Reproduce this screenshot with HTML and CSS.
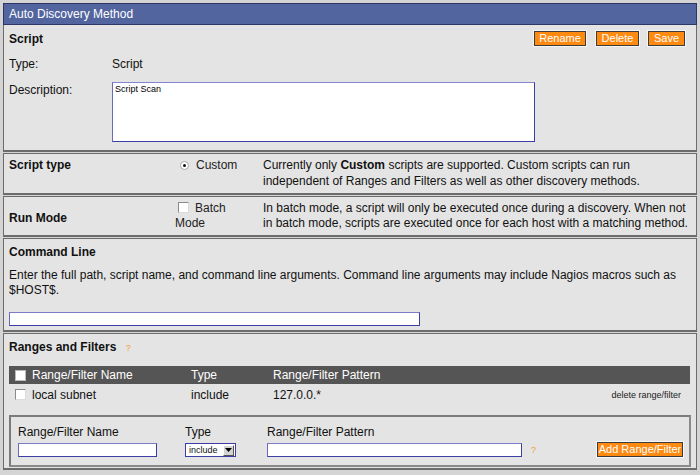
FILE: index.html
```html
<!DOCTYPE html>
<html>
<head>
<meta charset="utf-8">
<link rel="stylesheet" href="styles.css">
</head>
<body>
<div class="frame">
  <div class="titlebar">Auto Discovery Method</div>

  <section class="sec sec-script">
    <div class="script-head">
      <span class="h">Script</span>
      <div class="btns">
        <span class="btn btn-rename">Rename</span>
        <span class="btn btn-delete">Delete</span>
        <span class="btn btn-save">Save</span>
      </div>
    </div>
    <div class="field-row type-row">
      <span class="lbl">Type:</span>
      <span class="val">Script</span>
    </div>
    <div class="field-row desc-row">
      <span class="lbl lbl-desc">Description:</span>
      <textarea class="ta">Script Scan</textarea>
    </div>
  </section>

  <section class="sec sec-opt sec-type">
    <div class="opt-label h">Script type</div>
    <div class="opt-choice"><span class="radio"><span class="dot"></span></span>Custom</div>
    <div class="opt-desc">Currently only <b>Custom</b> scripts are supported. Custom scripts can run independent of Ranges and Filters as well as other discovery methods.</div>
  </section>

  <section class="sec sec-opt sec-run">
    <div class="opt-label h">Run Mode</div>
    <div class="opt-choice batch"><span class="cb"></span>Batch Mode</div>
    <div class="opt-desc">In batch mode, a script will only be executed once during a discovery. When not in batch mode, scripts are executed once for each host with a matching method.</div>
  </section>

  <section class="sec sec-cmd">
    <div class="h">Command Line</div>
    <p class="cmd-text">Enter the full path, script name, and command line arguments. Command line arguments may include Nagios macros such as $HOST$.</p>
    <input class="inp cmd-inp" type="text">
  </section>

  <section class="sec sec-ranges">
    <div class="h">Ranges and Filters <span class="help">?</span></div>
    <div class="rtable">
      <div class="rrow rhead">
        <span class="cell"><span class="cb cb-head"></span></span>
        <span class="cell">Range/Filter Name</span>
        <span class="cell">Type</span>
        <span class="cell">Range/Filter Pattern</span>
        <span class="cell"></span>
      </div>
      <div class="rrow rbody">
        <span class="cell"><span class="cb"></span></span>
        <span class="cell">local subnet</span>
        <span class="cell">include</span>
        <span class="cell">127.0.0.*</span>
        <span class="cell del">delete range/filter</span>
      </div>
    </div>
    <div class="addbox">
      <div class="add-labels">
        <span class="al al-name">Range/Filter Name</span>
        <span class="al al-type">Type</span>
        <span class="al">Range/Filter Pattern</span>
      </div>
      <div class="add-inputs">
        <input class="inp name-inp" type="text">
        <span class="sel"><span class="sel-txt">include</span><span class="sel-btn"><svg width="7" height="4" viewBox="0 0 7 4"><path d="M0 0h7L3.5 4z" fill="#000"/></svg></span></span>
        <input class="inp pat-inp" type="text">
        <span class="help help2">?</span>
        <span class="btn btn-add">Add Range/Filter</span>
      </div>
    </div>
  </section>
</div>
</body>
</html>
```

FILE: styles.css
```css
* { box-sizing: border-box; }
html, body { margin: 0; padding: 0; }
body {
  width: 700px;
  height: 475px;
  background: #d4d4d4;
  font-family: "Liberation Sans", Arial, sans-serif;
  font-size: 12px;
  color: #111;
  overflow: hidden;
}
.frame {
  padding: 3px 3px 0 3px;
}
.titlebar {
  height: 22px;
  background: #53659f;
  border: 1px solid #2c3766;
  color: #fff;
  font-size: 12px;
  line-height: 20px;
  padding-left: 5px;
}
.sec {
  background: #e4e4e4;
  border: 1px solid #6c6c6c;
  border-bottom: 2px solid #6c6c6c;
  margin-top: 1px;
  padding-left: 5px;
  padding-right: 6px;
}
.sec-script { margin-top: 0; border-top: 0; height: 127px; padding-top: 6px; }
.h { font-weight: bold; }

.script-head {
  display: flex;
  justify-content: space-between;
  align-items: center;
  height: 15px;
  padding-right: 5px;
}
.btns { display: flex; gap: 9px; }
.btn {
  display: inline-block;
  height: 15px;
  background: #ff8a12;
  border: 1px solid #3c3c3c;
  box-shadow: 0 0 0 1px #f6f6f6;
  color: #fff;
  font-size: 11px;
  line-height: 13px;
  text-align: center;
}
.btn-rename { width: 52px; margin-right: 1px; }
.btn-delete { width: 43px; }
.btn-save { width: 37px; }

.field-row { display: flex; line-height: 14px; }
.lbl { width: 103px; flex: none; }
.type-row { margin-top: 11px; }
.desc-row { margin-top: 11px; }
.lbl-desc { padding-top: 1px; }
.ta {
  width: 423px;
  height: 60px;
  margin: 0;
  padding: 1px 2px;
  border: 1px solid #3d3da6;
  border-top-color: #8585cf;
  border-left-color: #6a6abc;
  background: #fff;
  font-family: "Liberation Sans", Arial, sans-serif;
  font-size: 9px;
  line-height: 11px;
  resize: none;
  color: #000;
}

.sec-opt {
  display: grid;
  grid-template-columns: 166px 88px 1fr;
  padding-right: 3px;
}
.sec-type { height: 42px; padding-top: 3px; line-height: 16px; }
.sec-run { height: 41px; padding-top: 4px; line-height: 15px; }
.sec-run .opt-label { align-self: center; }
.opt-choice { color: #222; }
.sec-type .opt-choice { padding-left: 5px; display: flex; align-items: center; align-self: start; height: 16px; }
.radio {
  width: 9px; height: 9px;
  border-radius: 50%;
  border: 1px solid #a8a8a8;
  background: #fff;
  display: inline-flex;
  align-items: center;
  justify-content: center;
  margin-right: 7px;
}
.dot { width: 3px; height: 3px; border-radius: 50%; background: #111; }
.batch { max-width: 60px; }
.cb {
  display: inline-block;
  width: 11px; height: 11px;
  background: #fff;
  border: 1px solid #8a8a8a;
  border-right-color: #dcdcdc;
  border-bottom-color: #dcdcdc;
  vertical-align: -1px;
}
.batch .cb { margin-left: 3px; margin-right: 6px; }
.opt-desc { color: #111; }

.sec-cmd { height: 94px; padding-top: 6px; }
.sec-cmd .h { line-height: 14px; }
.cmd-text { margin: 9px 0 0 0; line-height: 15px; }
.inp {
  display: block;
  height: 14px;
  margin: 0;
  padding: 0;
  border: 1px solid #3d3da6;
  border-top-color: #7c7cc8;
  border-left-color: #6a6abc;
  background: #fff;
}
.cmd-inp { width: 411px; margin-top: 14px; }

.sec-ranges { height: 137px; padding-top: 6px; }
.sec-ranges > .h { line-height: 14px; }
.help { color: #f0a030; font-size: 9px; font-weight: normal; margin-left: 6px; }

.rtable { margin-top: 11px; width: 681px; }
.rrow {
  display: grid;
  grid-template-columns: 23px 159px 82px 1fr auto;
  align-items: center;
}
.rhead { height: 18px; background: #555; color: #fff; }
.rhead .cell:first-child, .rbody .cell:first-child { padding-left: 6px; display: flex; }
.cb-head { border: 1px solid #bbb; }
.rbody { height: 21px; color: #111; }
.del { font-size: 9px; padding-right: 9px; color: #222; }

.addbox {
  margin-top: 10px;
  width: 682px;
  height: 52px;
  border: 2px solid #7a7a7a;
  border-right-color: #8a8a8a;
  border-bottom-color: #8a8a8a;
  padding: 8px 6px 0 7px;
}
.add-labels { display: flex; line-height: 14px; }
.al-name { width: 167px; }
.al-type { width: 82px; }
.add-inputs { display: flex; align-items: center; margin-top: 3px; height: 15px; }
.name-inp { width: 139px; margin-right: 28px; }
.sel {
  width: 51px; height: 14px;
  border: 1px solid #3d3da6;
  background: #fff;
  display: flex;
  align-items: center;
  justify-content: space-between;
  margin-right: 31px;
  margin-top: 1px;
}
.sel-txt { font-size: 9px; padding-left: 3px; color: #111; }
.sel-btn {
  width: 11px; height: 11px;
  margin-right: 1px;
  background: #d4d4d4;
  border: 1px solid #fff;
  border-right-color: #555;
  border-bottom-color: #555;
  display: flex; align-items: center; justify-content: center;
}
.pat-inp { width: 255px; }
.help2 { margin-left: 9px; margin-right: 0; }
.btn-add { width: 86px; margin-left: auto; line-height: 13px; font-size: 11px; }
```
